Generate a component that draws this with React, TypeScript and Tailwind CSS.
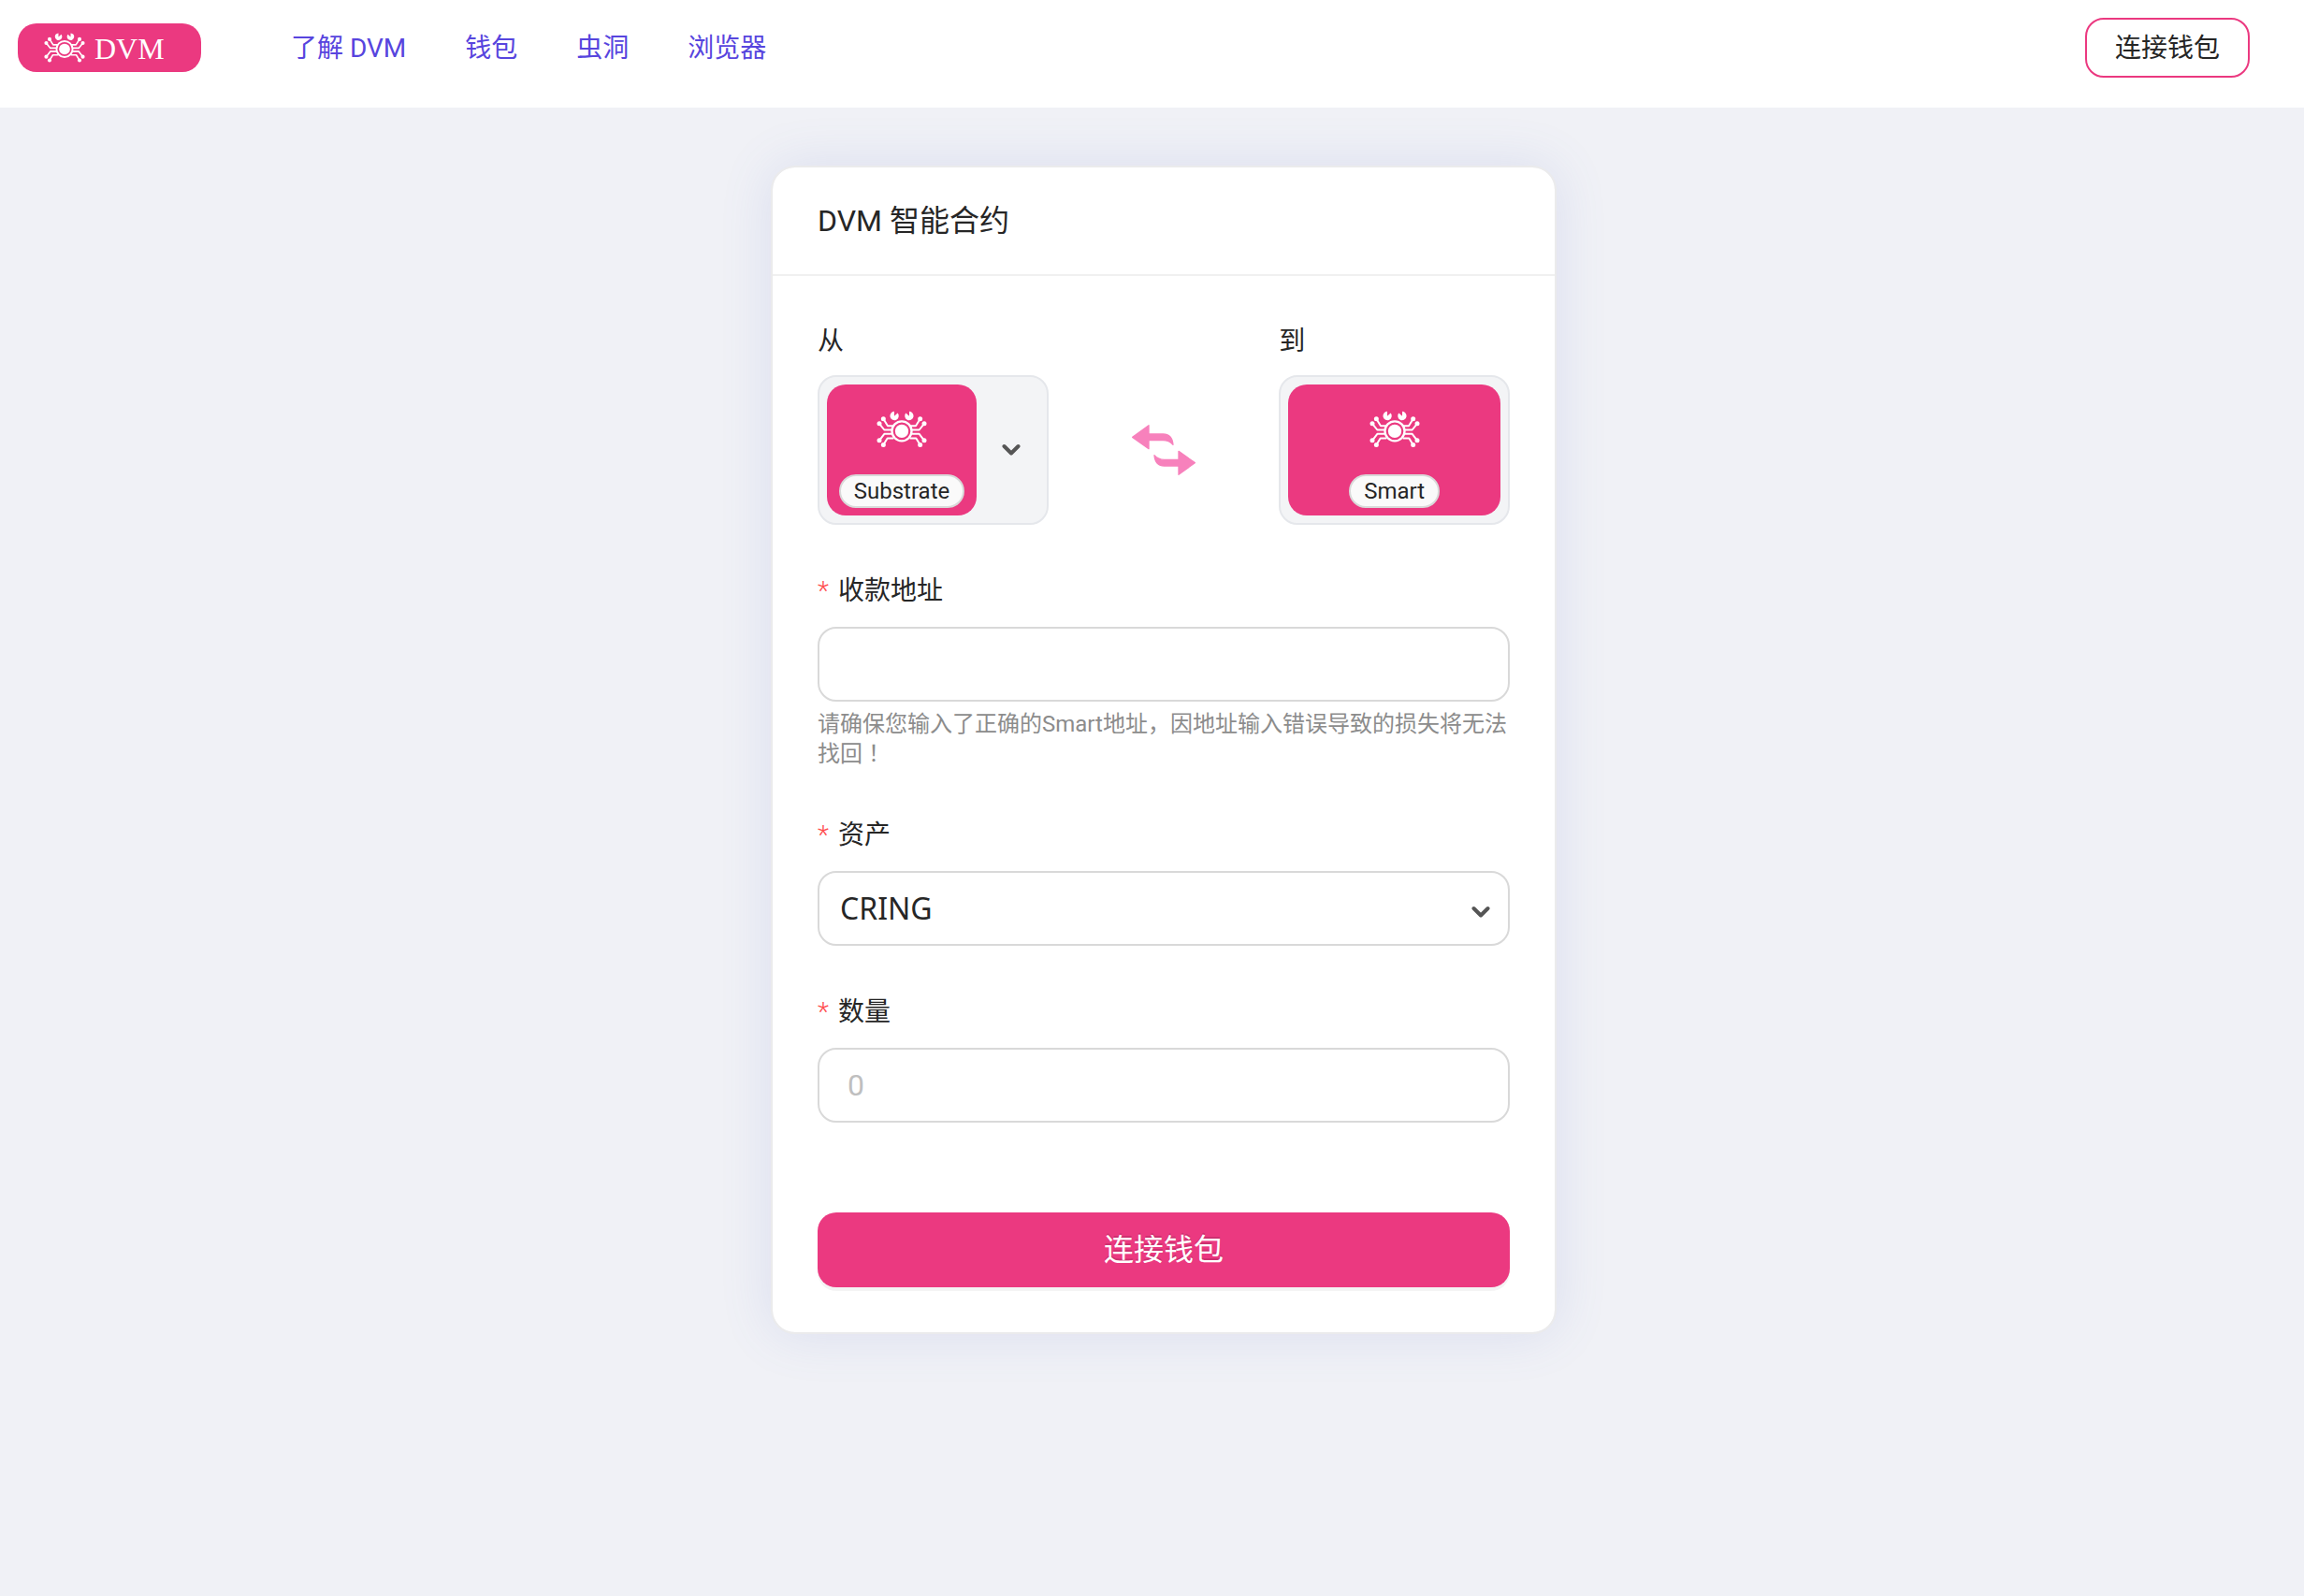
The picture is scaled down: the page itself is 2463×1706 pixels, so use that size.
import type { ReactNode } from 'react';

const navItems = ['了解 DVM', '钱包', '虫洞', '浏览器'];

function CrabLegs() {
  return (
    <g>
      <g fill="none" stroke="currentColor" strokeWidth="6" strokeLinejoin="round">
        <path d="M43 53 57 75H76" />
        <path d="M30 68 46 88H70" />
        <path d="M30 122 46 101H70" />
        <path d="M43 136 56 115H76" />
      </g>
      <circle cx="43" cy="53" r="7.5" fill="currentColor" />
      <circle cx="30" cy="68" r="7.5" fill="currentColor" />
      <circle cx="30" cy="122" r="7.5" fill="currentColor" />
      <circle cx="43" cy="136" r="7.5" fill="currentColor" />
      <path d="M78 29A14 14 0 1 0 89 34L78 44Z" fill="currentColor" />
    </g>
  );
}

function Crab({ className }: { className: string }) {
  return (
    <svg viewBox="21 28 162 117" className={className} aria-hidden="true">
      <CrabLegs />
      <g transform="translate(204 0) scale(-1 1)">
        <CrabLegs />
      </g>
      <circle cx="102" cy="92" r="31.5" fill="none" stroke="currentColor" strokeWidth="7" />
      <circle cx="102" cy="92" r="21.5" fill="currentColor" />
    </svg>
  );
}

function Chevron() {
  return (
    <svg viewBox="0 0 20 14" className="h-[14px] w-5 text-[#555]" aria-hidden="true">
      <path d="M2.5 3 10 10.5 17.5 3" fill="none" stroke="currentColor" strokeWidth="4" strokeLinecap="round" strokeLinejoin="round" />
    </svg>
  );
}

function SwapIcon() {
  const arrow = 'M92 412 144 374V402H190C211 402 220 415 222 436C213 426 201 422 190 422H144V449Z';
  return (
    <svg viewBox="87 369 210 168" className="h-14 w-[70px]" fill="#f781bc" stroke="#f781bc" strokeWidth="4" strokeLinejoin="round" aria-hidden="true">
      <path d={arrow} />
      <path d={arrow} transform="rotate(180 192 453)" />
    </svg>
  );
}

function NetworkTile({ name, className }: { name: string; className: string }) {
  return (
    <span className={`flex h-[140px] flex-col items-center justify-between rounded-[20px] bg-[#eb3980] pt-7 pb-2 text-white ${className}`}>
      <Crab className="h-10 w-[54px]" />
      <span className="rounded-full border-2 border-[#d9d9d9] bg-[#fafafa] px-[14px] text-2xl leading-8 text-[#262626]">
        {name}
      </span>
    </span>
  );
}

function Field({ id, label, children }: { id: string; label: string; children: ReactNode }) {
  return (
    <div>
      <label htmlFor={id} className="mb-4 flex text-[28px] leading-[44px]">
        <span className="w-[22px] font-light text-[#ff4d4f]">*</span>
        {label}
      </label>
      {children}
    </div>
  );
}

export default function App() {
  return (
    <div className="min-h-screen bg-[#f0f1f6] font-[Roboto,'Noto_Sans_CJK_SC',sans-serif] text-[#262626]">
      <header className="flex items-center bg-white pt-[19px] pr-[58px] pb-8 pl-[19px]">
        <a href="#" className="flex h-[52px] w-[196px] items-center rounded-[20px] bg-[#eb3980] pl-7 text-white">
          <Crab className="h-8 w-11" />
          <span className="ml-[10px] pt-0.5 font-['Liberation_Serif',serif] text-[32px] leading-9">DVM</span>
        </a>
        <nav className="ml-24 flex gap-[63px] pt-0.5 text-[28px] leading-10 text-[#5745de]">
          {navItems.map((item) => (
            <a key={item} href="#">
              {item}
            </a>
          ))}
        </nav>
        <button type="button" className="ml-auto h-16 rounded-[20px] border-2 border-[#eb3980] px-[30px] pt-0.5 text-[28px] leading-10">
          连接钱包
        </button>
      </header>

      <main className="pt-[62px] pb-16 pl-[25px]">
        <section className="mx-auto max-w-[840px] rounded-[26px] border-2 border-[#ebebec] bg-white bg-clip-padding shadow-[0_0_56px_rgba(89,115,200,0.14)]">
          <h1 className="border-b-2 border-[#f0f0f0] px-12 py-8 text-[32px] leading-[50px]">DVM 智能合约</h1>

          <form className="flex flex-col gap-[49px] px-12 pt-[46px] pb-12">
            <div className="grid grid-cols-3">
              <div>
                <div id="from-label" className="mb-3 text-[28px] leading-[48px]">从</div>
                <button type="button" aria-labelledby="from-label" className="flex w-full items-center rounded-[20px] border-2 border-[#e5e7eb] bg-[#f3f4f6] p-2">
                  <NetworkTile name="Substrate" className="w-40" />
                  <span className="flex flex-1 justify-center pl-2">
                    <Chevron />
                  </span>
                </button>
              </div>
              <div className="flex h-40 items-center justify-center self-end">
                <button type="button" aria-label="切换方向">
                  <SwapIcon />
                </button>
              </div>
              <div>
                <div className="mb-3 text-[28px] leading-[48px]">到</div>
                <div className="rounded-[20px] border-2 border-[#e5e7eb] bg-[#f3f4f6] p-2">
                  <NetworkTile name="Smart" className="w-full" />
                </div>
              </div>
            </div>

            <Field id="recipient" label="收款地址">
              <input id="recipient" type="text" className="block h-20 w-full rounded-[20px] border-2 border-[#d9d9d9] px-5 text-[32px] outline-none" />
              <p className="mt-2 text-2xl leading-8 text-[#8c8c8c]">
                请确保您输入了正确的Smart地址，因地址输入错误导致的损失将无法找回
                <span className="inline-block font-['Noto_Sans_CJK_TC',sans-serif] leading-6" lang="zh-TW">！</span>
              </p>
            </Field>

            <Field id="asset" label="资产">
              <div className="relative">
                <select id="asset" className="block h-20 w-full appearance-none rounded-[20px] border-2 border-[#d9d9d9] bg-white px-[22px] font-['Noto_Sans',sans-serif] text-[32px] outline-none">
                  <option>CRING</option>
                </select>
                <span className="pointer-events-none absolute inset-y-0 right-[21px] flex items-center pt-2">
                  <Chevron />
                </span>
              </div>
            </Field>

            <Field id="amount" label="数量">
              <input id="amount" type="text" placeholder="0" className="block h-20 w-full rounded-[20px] border-2 border-[#d9d9d9] px-[30px] text-[32px] outline-none placeholder:text-[#bfbfbf]" />
            </Field>

            <button type="submit" className="mt-[47px] h-20 rounded-[20px] bg-[#eb3980] text-[32px] leading-[48px] text-white shadow-[0_4px_0_rgba(0,0,0,0.045)] [text-shadow:0_-2px_0_rgba(0,0,0,0.12)]">
              连接钱包
            </button>
          </form>
        </section>
      </main>
    </div>
  );
}
